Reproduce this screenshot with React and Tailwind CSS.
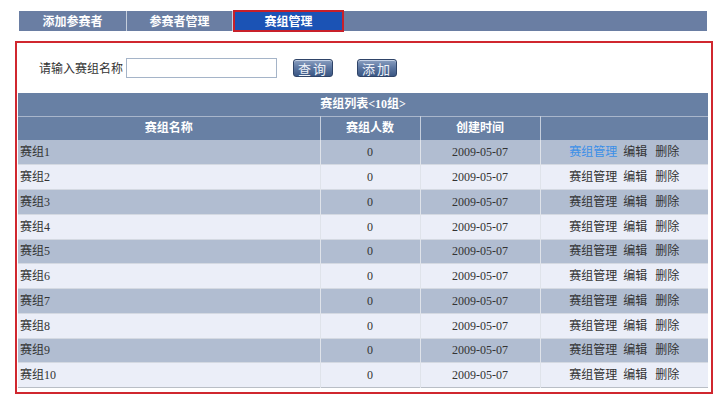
const rows = Array.from({ length: 10 }, (_, i) => ({
  name: `赛组${i + 1}`,
  count: 0,
  date: "2009-05-07",
}));

function Tab({ label, active, w }) {
  return (
    <div
      className={`flex items-center justify-center font-bold text-white ${w} ${
        active ? "h-[22px] -my-px border-2 border-[#c8202a] bg-[#1b53b5]" : "h-full border-r border-[#c5cedc]"
      }`}
    >
      {label}
    </div>
  );
}

function SkinButton({ children }) {
  return (
    <button
      type="button"
      className="flex h-[18px] w-[40px] items-center justify-center rounded-[3px] border border-[#2f4468] bg-gradient-to-b from-[#8a9fc0] via-[#5b75a0] to-[#3b5783] text-[13px] tracking-[2px] leading-none text-[#eef2f8] shadow-[inset_0_1px_0_#c5d2e6]"
    >
      {children}
    </button>
  );
}

export default function App() {
  return (
    <div
      className="h-[404px] w-[723px] bg-white text-[12px] text-[#333]"
      style={{ fontFamily: '"Noto Sans CJK SC", "DejaVu Sans", sans-serif' }}
    >
      <div className="pt-[11px] pl-[19px]">
        <div className="flex h-[20px] w-[688px] items-center bg-[#6a7ea3]">
          <Tab label="添加参赛者" w="w-[108px]" />
          <Tab label="参赛者管理" w="w-[106px]" />
          <Tab label="赛组管理" active w="w-[111px]" />
        </div>
      </div>

      <div className="ml-[15px] mt-[10px] h-[353px] w-[698px] border-2 border-[#d0272f] pl-px">
        <div className="flex h-[50px] items-center pl-[21px]">
          <span className="mr-[3px]">请输入赛组名称</span>
          <input
            type="text"
            className="h-[20px] w-[151px] border border-[#a5b4c8] bg-white outline-none"
          />
          <div className="ml-[16px]">
            <SkinButton>查询</SkinButton>
          </div>
          <div className="ml-[24px]">
            <SkinButton>添加</SkinButton>
          </div>
        </div>

        <table
          className="w-[690px] table-fixed border-collapse"
          style={{ fontFamily: '"Liberation Serif", "Noto Sans CJK SC", serif' }}
        >
          <colgroup>
            <col className="w-[302px]" />
            <col className="w-[100px]" />
            <col className="w-[120px]" />
            <col className="w-[168px]" />
          </colgroup>
          <thead>
            <tr className="h-[23px] border-b border-[#a9b6cb] bg-[#6880a4]">
              <th colSpan={4} className="font-bold text-white">
                赛组列表&lt;10组&gt;
              </th>
            </tr>
            <tr className="h-[24px] bg-[#6880a4] font-bold text-white">
              <th className="border-r border-[#c5cedc]">赛组名称</th>
              <th className="border-r border-[#c5cedc]">赛组人数</th>
              <th className="border-r border-[#c5cedc]">创建时间</th>
              <th></th>
            </tr>
          </thead>
          <tbody>
            {rows.map((r, i) => (
              <tr
                key={r.name}
                className={`h-[24.75px] border-b ${
                  i % 2 === 0 ? "bg-[#b1bdd1]" : "bg-[#ebeef8]"
                } ${i === rows.length - 1 ? "border-[#b9bec6]" : "border-[#d4d9e2]"}`}
              >
                <td className="border-r border-[#dfe3ea] pl-[2px]">{r.name}</td>
                <td className="border-r border-[#dfe3ea] text-center">{r.count}</td>
                <td className="border-r border-[#dfe3ea] text-center">{r.date}</td>
                <td className="text-center">
                  <span className={i === 0 ? "text-[#3b8fe8]" : ""}>赛组管理</span>
                  <span className="ml-[6px]">编辑</span>
                  <span className="ml-[8px]">删除</span>
                </td>
              </tr>
            ))}
          </tbody>
        </table>
      </div>
    </div>
  );
}
